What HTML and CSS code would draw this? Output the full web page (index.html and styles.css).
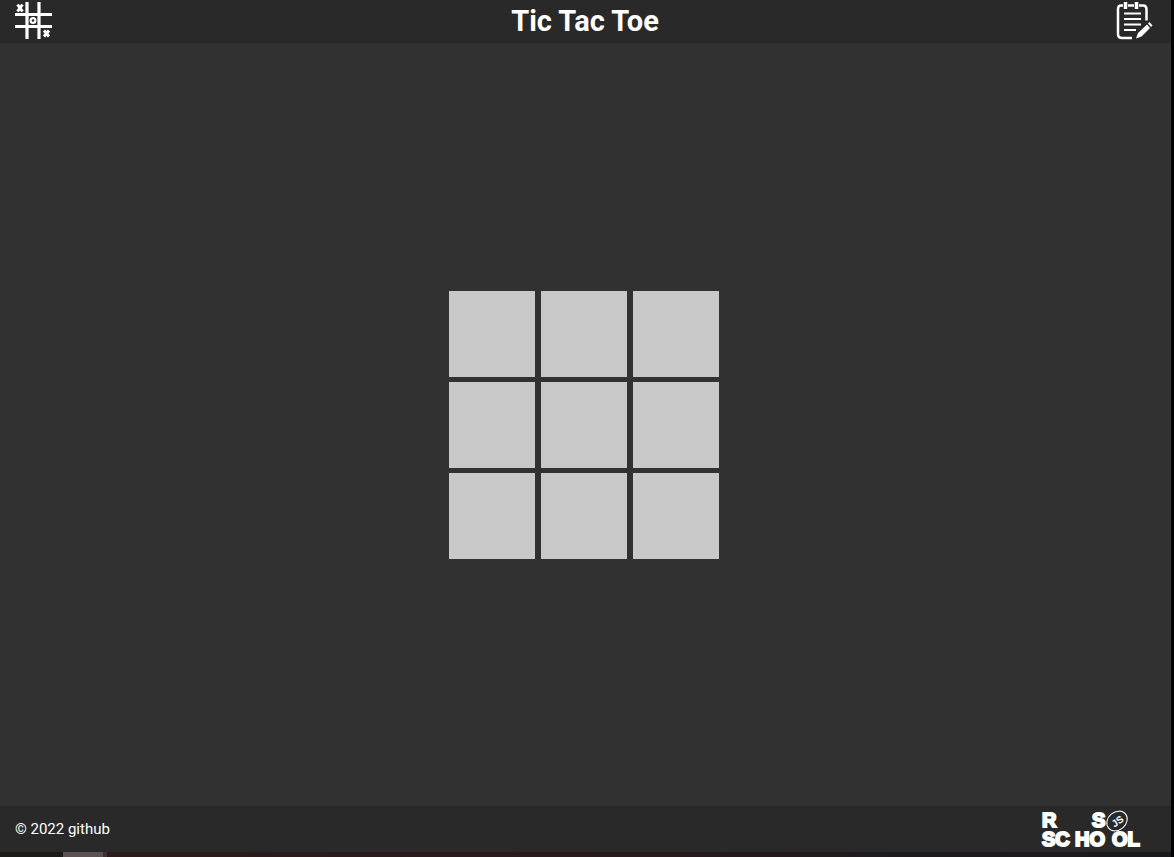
FILE: index.html
```html
<!DOCTYPE html>
<html lang="en">
<head>
<meta charset="utf-8">
<meta name="viewport" content="width=device-width, initial-scale=1">
<title>Tic Tac Toe</title>
<link rel="stylesheet" href="styles.css">
</head>
<body>
<div class="page">
  <header class="header">
    <button class="icon-button" type="button" aria-label="New game">
      <svg class="icon" viewBox="0 0 40 40" fill="none" stroke="#fff">
        <path d="M13 2v37M25 2v37M1 14.500h37M1 26.500h37" stroke-width="3.200"/>
        <path d="M3.500 4.500l5 7M8.500 4.500l-5 7M30 30.500l5 6M35 30.500l-5 6" stroke-width="3"/>
        <circle cx="19" cy="20.500" r="2.400" stroke-width="2.200"/>
      </svg>
    </button>
    <h1 class="title">Tic Tac Toe</h1>
    <button class="icon-button" type="button" aria-label="Results">
      <svg class="icon" viewBox="0 0 40 40" fill="none" stroke="#fff">
        <path d="M7 5.500H5Q2 5.500 2 9v25q0 4 4 4h10M12 5.500h6M23 5.500h4q3.500 0 3.500 4v11" stroke-width="2.500"/>
        <path d="M9.500 2v7M20.500 2v7" stroke-width="3.500"/>
        <path d="M8 13.500h17M8 19h17M8 24.500h17M8 30h12" stroke-width="2"/>
        <path d="M20 38.500l2-5.500 9-8.500 3 3.500-8.500 8.500zM32 23.500l1.500-1.500 3 3.500-1.500 1.500z" fill="#fff" stroke="none"/>
      </svg>
    </button>
  </header>
  <main class="main">
    <div class="board">
      <button class="cell" type="button" aria-label="Cell 1"></button>
      <button class="cell" type="button" aria-label="Cell 2"></button>
      <button class="cell" type="button" aria-label="Cell 3"></button>
      <button class="cell" type="button" aria-label="Cell 4"></button>
      <button class="cell" type="button" aria-label="Cell 5"></button>
      <button class="cell" type="button" aria-label="Cell 6"></button>
      <button class="cell" type="button" aria-label="Cell 7"></button>
      <button class="cell" type="button" aria-label="Cell 8"></button>
      <button class="cell" type="button" aria-label="Cell 9"></button>
    </div>
  </main>
  <footer class="footer">
    <a class="link" href="#github">© 2022 github</a>
    <a class="school" href="#school" aria-label="RS School">
      <svg class="logo" viewBox="0 0 100 40">
        <g class="logo-text">
          <text x="0" y="18">R</text><text x="50" y="18">S</text>
          <text x="0" y="37">SC</text>
          <text x="33" y="37">HO</text>
          <text x="70" y="37">OL</text>
        </g>
        <ellipse cx="75" cy="12" rx="11" ry="9" transform="rotate(-40 75 12)" fill="none" stroke="#fff" stroke-width="1"/>
        <text class="logo-js" x="69" y="16" transform="rotate(-35 75 12)">JS</text>
      </svg>
    </a>
  </footer>
  <div class="dock"><div class="dock-item"></div></div>
</div>
</body>
</html>
```
FILE: styles.css
```css
* { box-sizing: border-box; }
body {
  margin: 0;
  background: #000;
  color: #fff;
  font-family: Roboto, "Liberation Sans", sans-serif;
}
.page {
  display: flex;
  flex-direction: column;
  min-height: 100vh;
  margin-right: 3px;
  background: #313131;
}
.header, .footer {
  display: flex;
  justify-content: space-between;
  background: #292929;
}
.header { align-items: flex-start; padding: 0 15px 1px 14px; }
.icon-button {
  display: block;
  width: 40px;
  height: 40px;
  padding: 0;
  border: 0;
  background: none;
  cursor: pointer;
}
.icon, .logo { display: block; width: 100%; height: 100%; overflow: visible; }
.title { margin: 0; font-size: 29px; line-height: 42px; font-weight: 700; }
.main {
  display: flex;
  flex: 1;
  align-items: center;
  justify-content: center;
  padding-right: 3px;
}
.board {
  display: grid;
  grid-template-columns: repeat(3, 86px);
  grid-auto-rows: 86px;
  gap: 5px 6px;
}
.cell { padding: 0; border: 0; background: #c8c8c8; cursor: pointer; }
.footer { align-items: center; padding: 3px 29px 3px 15px; }
.link { color: #fff; font-size: 15px; line-height: 20px; text-decoration: none; }
.school { display: block; width: 100px; height: 40px; }
.logo-text { fill: #fff; stroke: #fff; stroke-width: 2px; font: 700 20px "Liberation Sans", Arial, sans-serif; }
.logo-js { fill: #fff; font: 700 10px "Liberation Sans", Arial, sans-serif; }
.dock { height: 5px; padding-left: 63px; background: linear-gradient(90deg, #1d1b19 0, #1d1b19 100px, #2c1c19 108px, #281a1c 50%, #19191f); }
.dock-item { width: 44px; height: 5px; border-right: 4px solid #3c3432; background: #5c5250; }
```
